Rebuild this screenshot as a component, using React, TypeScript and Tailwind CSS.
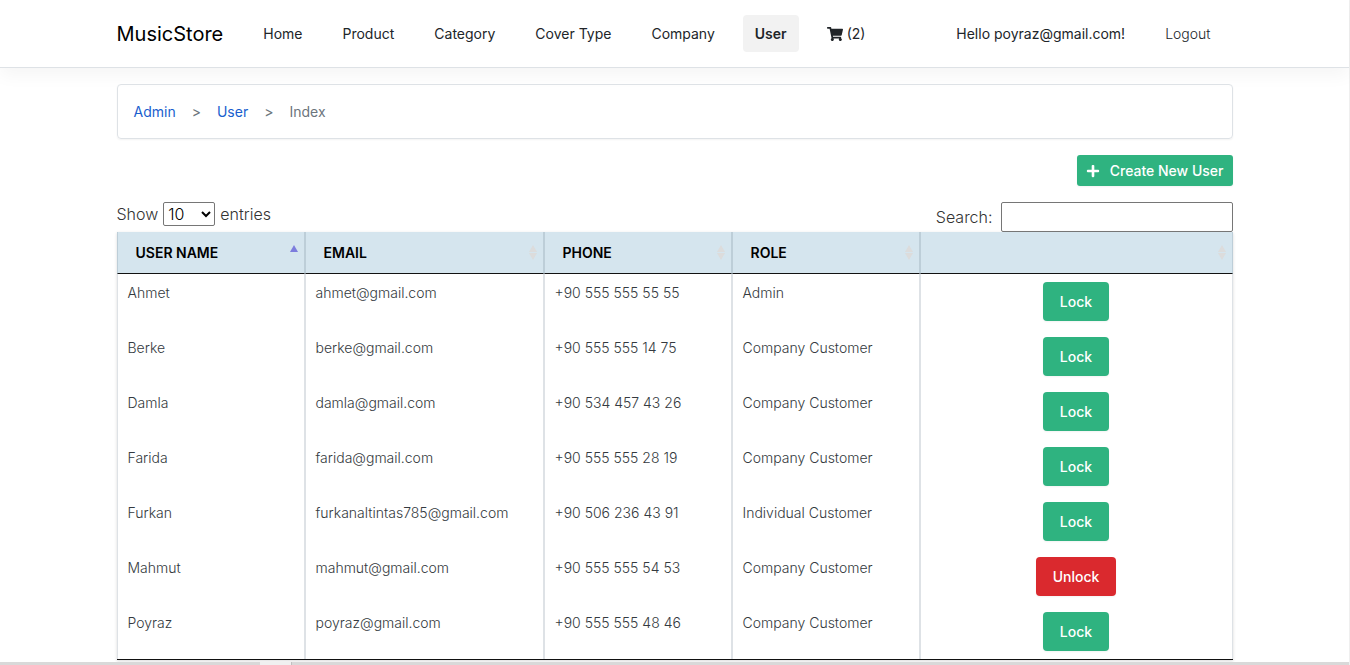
import React from "react";
import { FaPlus, FaShoppingCart } from "react-icons/fa";

const links = ["Home", "Product", "Category", "Cover Type", "Company"];

const columns = ["User Name", "Email", "Phone", "Role", ""];

const users = [
  { name: "Ahmet", email: "ahmet@gmail.com", phone: "+90 555 555 55 55", role: "Admin", locked: false },
  { name: "Berke", email: "berke@gmail.com", phone: "+90 555 555 14 75", role: "Company Customer", locked: false },
  { name: "Damla", email: "damla@gmail.com", phone: "+90 534 457 43 26", role: "Company Customer", locked: false },
  { name: "Farida", email: "farida@gmail.com", phone: "+90 555 555 28 19", role: "Company Customer", locked: false },
  { name: "Furkan", email: "furkanaltintas785@gmail.com", phone: "+90 506 236 43 91", role: "Individual Customer", locked: false },
  { name: "Mahmut", email: "mahmut@gmail.com", phone: "+90 555 555 54 53", role: "Company Customer", locked: true },
  { name: "Poyraz", email: "poyraz@gmail.com", phone: "+90 555 555 48 46", role: "Company Customer", locked: false },
];

function SortIcon({ active }: { active: boolean }) {
  return (
    <svg viewBox="0 0 8 15" className="h-[15px] w-2 shrink-0" aria-hidden="true">
      <path d="M4 0L8 7H0Z" fill={active ? "#7d7ddd" : "#dcdcdc"} />
      {!active && <path d="M0 8H8L4 15Z" fill="#dcdcdc" />}
    </svg>
  );
}

function Header() {
  return (
    <header className="border-b border-[#dee2e6] shadow-[0_8px_16px_rgba(0,0,0,0.04)]">
      <nav className="mx-auto flex h-[67px] max-w-[1140px] items-center px-3 text-sm text-[#212529]">
        <a href="#" className="mr-7 text-xl text-black">MusicStore</a>
        <ul className="flex items-center gap-4">
          {links.map((link) => (
            <li key={link}>
              <a href="#" className="block rounded px-3 py-2 leading-[21px]">{link}</a>
            </li>
          ))}
          <li>
            <a href="#" aria-current="page" className="block rounded bg-[#f2f2f2] px-3 py-2 leading-[21px] font-semibold">User</a>
          </li>
          <li>
            <a href="#" className="flex items-center gap-1 px-3 py-2 leading-[21px]">
              <FaShoppingCart className="size-4" />
              (2)
            </a>
          </li>
        </ul>
        <div className="ml-auto flex items-center gap-4 pr-[10px]">
          <a href="#" className="px-3 py-2">Hello poyraz@gmail.com!</a>
          <button type="button" className="px-3 py-2 font-light">Logout</button>
        </div>
      </nav>
    </header>
  );
}

export default function App() {
  return (
    <div className="flex min-h-screen flex-col border-r border-[#efefef] bg-white font-['Inter',sans-serif] text-[#212529]">
      <Header />
      <main className="mx-auto w-full max-w-[1140px] px-3 pt-4">
        <nav aria-label="Breadcrumb" className="rounded border border-[#dee2e6] p-4 text-sm leading-[21px] shadow-[0_1px_2px_rgba(0,0,0,0.05)]">
          <ol className="flex gap-4 text-[#6c757d]">
            <li><a href="#" className="text-[#1a5fce]">Admin</a></li>
            <li aria-hidden="true">&gt;</li>
            <li><a href="#" className="text-[#1a5fce]">User</a></li>
            <li aria-hidden="true">&gt;</li>
            <li aria-current="page">Index</li>
          </ol>
        </nav>
        <div className="mt-4 flex justify-end">
          <button type="button" className="flex h-[31px] items-center gap-[10px] rounded-[3px] bg-[#2fb380] px-[9px] text-sm font-medium text-white shadow-[0_1px_2px_rgba(0,0,0,0.05)]">
            <FaPlus className="size-[14px]" />
            Create New User
          </button>
        </div>
        <div className="mt-4 flex items-start justify-between font-light text-[#333333]">
          <label className="flex items-center gap-[5px]">
            Show
            <select className="h-6 w-[52px] rounded-[2px] border border-[#767676] font-light text-black">
              <option>10</option>
              <option>25</option>
              <option>50</option>
            </select>
            entries
          </label>
          <label className="flex items-center gap-2">
            Search:
            <input type="search" className="h-[30px] w-[232px] rounded-[2px] border border-[#767676] px-1" />
          </label>
        </div>
        <table className="w-full table-fixed border-separate border-spacing-0 border-b border-[#111111] text-left text-sm shadow-[0_1px_3px_rgba(0,0,0,0.15)]">
          <colgroup>
            <col className="w-[188px]" />
            <col className="w-[239px]" />
            <col className="w-[188px]" />
            <col className="w-[188px]" />
            <col />
          </colgroup>
          <thead>
            <tr className="bg-[#d5e5ee]">
              {columns.map((column, i) => (
                <th key={column} scope="col" className="border-x border-b border-x-[#bdced8] border-b-[#111111] py-[10px] pr-[6px] pl-[18px] font-semibold text-black uppercase">
                  <div className="flex h-[21px] items-center justify-between">
                    <span>{column}</span>
                    <SortIcon active={i === 0} />
                  </div>
                </th>
              ))}
            </tr>
          </thead>
          <tbody>
            {users.map((user) => (
              <tr key={user.name} className="align-top leading-[22px] font-light text-[#343a40]">
                {[user.name, user.email, user.phone, user.role].map((value) => (
                  <td key={value} className="border-x border-[#dee2e6] px-[10px] py-2">{value}</td>
                ))}
                <td className="border-x border-[#dee2e6] py-2 text-center">
                  <button
                    type="button"
                    className={`mx-auto block h-[39px] rounded px-[17px] font-medium text-white shadow-[0_1px_2px_rgba(0,0,0,0.05)] ${user.locked ? "bg-[#da292e]" : "bg-[#2fb380]"}`}
                  >
                    {user.locked ? "Unlock" : "Lock"}
                  </button>
                </td>
              </tr>
            ))}
          </tbody>
        </table>
      </main>
      <footer className="mt-auto flex h-[3px] bg-[#d9d9d9]">
        <div className="ml-[260px] w-8 border-r border-[#c0c0c0] bg-[#f0f0f0]" />
      </footer>
    </div>
  );
}
